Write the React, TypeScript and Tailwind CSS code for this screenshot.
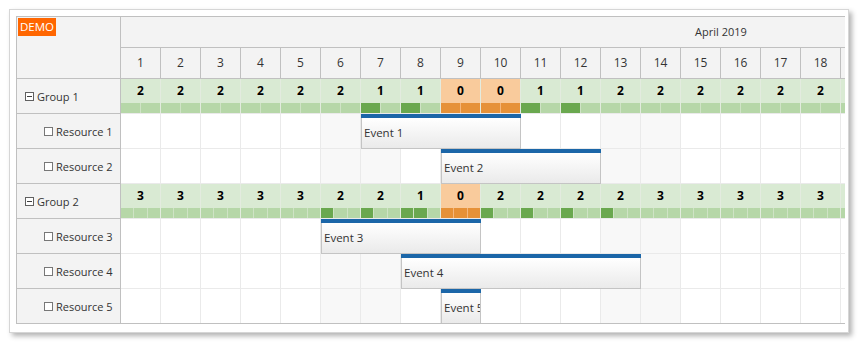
import React from "react";

const DAYS = Array.from({ length: 19 }, (_, i) => i + 1);
const WEEKEND = [6, 7, 13, 14];
const G1 = [2, 2, 2, 2, 2, 2, 1, 1, 0, 0, 1, 1, 2, 2, 2, 2, 2, 2, 2];
const G2 = [3, 3, 3, 3, 3, 2, 2, 1, 0, 2, 2, 2, 2, 3, 3, 3, 3, 3, 3];

type Ev = { text: string; start: number; days: number };

const ROWS: { kind: "group" | "res"; name: string; free?: number[]; cap?: number; events?: Ev[] }[] = [
  { kind: "group", name: "Group 1", free: G1, cap: 2 },
  { kind: "res", name: "Resource 1", events: [{ text: "Event 1", start: 7, days: 4 }] },
  { kind: "res", name: "Resource 2", events: [{ text: "Event 2", start: 9, days: 4 }] },
  { kind: "group", name: "Group 2", free: G2, cap: 3 },
  { kind: "res", name: "Resource 3", events: [{ text: "Event 3", start: 6, days: 4 }] },
  { kind: "res", name: "Resource 4", events: [{ text: "Event 4", start: 8, days: 6 }] },
  { kind: "res", name: "Resource 5", events: [{ text: "Event 5", start: 9, days: 1 }] },
];

function GroupCell({ free, cap, showNum }: { free: number; cap: number; showNum: boolean }) {
  const full = free === 0;
  const busy = cap - free;
  return (
    <div
      className={
        "w-[40px] shrink-0 h-full border-r border-[#e3ebdf] flex flex-col " +
        (full ? "bg-[#f9cb9c]" : "bg-[#d9ead3]")
      }
    >
      <div className="h-[24px] flex items-center justify-center font-bold text-[12px] text-black">
        {showNum ? free : ""}
      </div>
      <div className={"h-[10px] flex gap-px " + (full ? "bg-[#f4b77e]" : "bg-[#cfe3c6]")}>
        {Array.from({ length: cap }, (_, i) => (
          <div
            key={i}
            className={
              "flex-1 " + (full ? "bg-[#e69138]" : i < busy ? "bg-[#6aa84f]" : "bg-[#b6d7a8]")
            }
          />
        ))}
      </div>
    </div>
  );
}

function Event({ ev }: { ev: Ev }) {
  return (
    <div
      className="absolute top-0 h-[35px] flex flex-col overflow-hidden z-10"
      style={{ left: (ev.start - 1) * 40, width: ev.days * 40 }}
    >
      <div className="h-[4px] bg-[#1b66a8] shrink-0" />
      <div className="flex-1 border border-t-0 border-[#c4c4c4] bg-gradient-to-b from-white to-[#eaeaea] flex items-center pl-[2px] text-[#333] text-[11.5px] whitespace-nowrap overflow-hidden">
        {ev.text}
      </div>
    </div>
  );
}

export default function App() {
  return (
    <div className="w-[860px] h-[342px] bg-white pl-[9px] pt-[9px] font-['Open_Sans',sans-serif] text-[11px] text-[#333]">
      <div className="w-[840px] h-[324px] bg-white border border-[#d6d6d6] shadow-[3px_3px_5px_rgba(0,0,0,0.3)] pl-[6px] pt-[6px]">
        <div className="flex w-[829px] border border-r-0 border-[#c0c0c0]">
          {/* left column */}
          <div className="w-[104px] shrink-0 border-r border-[#c0c0c0] bg-[#f3f3f3]">
            <div className="h-[62px] border-b border-[#c0c0c0]">
              <div className="ml-px mt-px inline-block bg-[#ff6600] text-white text-[11.5px] h-[18px] leading-[18px] px-[2px]">
                DEMO
              </div>
            </div>
            {ROWS.map((r, i) => (
              <div
                key={r.name}
                className={
                  "flex items-center " +
                  (i < ROWS.length - 1 ? "h-[35px] border-b border-[#c0c0c0] " : "h-[34px] ") +
                  (r.kind === "group" ? "pl-[8px]" : "pl-[27px]")
                }
              >
                {r.kind === "group" ? (
                  <span className="w-[9px] h-[9px] border border-[#606060] bg-white flex items-center justify-center mr-[3px]">
                    <span className="w-[5px] h-px bg-[#404040]" />
                  </span>
                ) : (
                  <span className="w-[9px] h-[9px] border border-[#777] bg-white mr-[3px]" />
                )}
                <span className="leading-none">{r.name}</span>
              </div>
            ))}
          </div>
          {/* timeline */}
          <div className="w-[724px] overflow-hidden">
            <div className="w-[760px]">
              <div className="h-[31px] border-b border-[#c0c0c0] bg-[#f3f3f3] overflow-hidden">
                <div className="w-[1200px] h-[30px] flex items-center justify-center">April 2019</div>
              </div>
              <div className="h-[31px] border-b border-[#c0c0c0] bg-[#f3f3f3] flex">
                {DAYS.map((d) => (
                  <div
                    key={d}
                    className="w-[40px] shrink-0 h-[30px] border-r border-[#c0c0c0] flex items-center justify-center text-[12px]"
                  >
                    {d < 19 ? d : ""}
                  </div>
                ))}
              </div>
              {ROWS.map((r, i) => (
                <div
                  key={r.name}
                  className={
                    "relative flex " +
                    (i < ROWS.length - 1 ? "h-[35px] border-b border-[#eaeaea]" : "h-[34px]")
                  }
                >
                  {r.kind === "group"
                    ? DAYS.map((d) => (
                        <GroupCell key={d} free={r.free![d - 1]} cap={r.cap!} showNum={d < 19} />
                      ))
                    : DAYS.map((d) => (
                        <div
                          key={d}
                          className={
                            "w-[40px] shrink-0 h-full border-r border-[#eaeaea] " +
                            (WEEKEND.includes(d) ? "bg-[#f8f8f8]" : "bg-white")
                          }
                        />
                      ))}
                  {r.events?.map((ev) => <Event key={ev.text} ev={ev} />)}
                </div>
              ))}
            </div>
          </div>
        </div>
      </div>
    </div>
  );
}
